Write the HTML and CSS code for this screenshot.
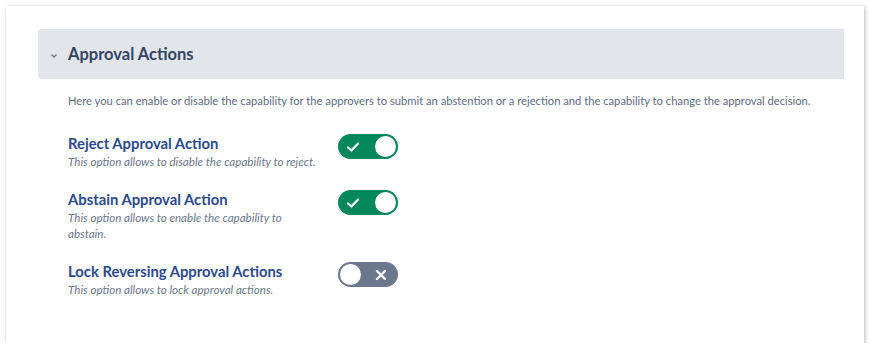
FILE: index.html
```html
<!DOCTYPE html>
<html lang="en">
<head>
    <meta charset="UTF-8">
    <meta name="viewport" content="width=device-width, initial-scale=1.0">
    <title>Approval Actions</title>
    <link rel="stylesheet" href="styles.css">
</head>
<body>
    <div class="card">
        <div class="section-header">
            <svg class="chevron" width="8" height="6" viewBox="0 0 8 6">
                <path d="M1.5 1.5 L4 4 L6.5 1.5" fill="none" stroke="#6b778c" stroke-width="1.3"/>
            </svg>
            <h2>Approval Actions</h2>
        </div>

        <div class="section-body">
            <p class="intro">Here you can enable or disable the capability for the approvers to submit an abstention or a rejection and the capability to change the approval decision.</p>

            <div class="option">
                <div class="option-text">
                    <div class="option-label">Reject Approval Action</div>
                    <div class="option-help">This option allows to disable the capability to reject.</div>
                </div>
                <div class="toggle on">
                    <svg class="toggle-icon" width="14" height="14" viewBox="0 0 14 14">
                        <path d="M2 7.5 L5.5 10.5 L12 3.5" fill="none" stroke="#fff" stroke-width="2.2" stroke-linecap="round" stroke-linejoin="round"/>
                    </svg>
                    <span class="knob"></span>
                </div>
            </div>

            <div class="option">
                <div class="option-text">
                    <div class="option-label">Abstain Approval Action</div>
                    <div class="option-help">This option allows to enable the capability to abstain.</div>
                </div>
                <div class="toggle on">
                    <svg class="toggle-icon" width="14" height="14" viewBox="0 0 14 14">
                        <path d="M2 7.5 L5.5 10.5 L12 3.5" fill="none" stroke="#fff" stroke-width="2.2" stroke-linecap="round" stroke-linejoin="round"/>
                    </svg>
                    <span class="knob"></span>
                </div>
            </div>

            <div class="option">
                <div class="option-text">
                    <div class="option-label">Lock Reversing Approval Actions</div>
                    <div class="option-help">This option allows to lock approval actions.</div>
                </div>
                <div class="toggle off">
                    <span class="knob"></span>
                    <svg class="toggle-icon" width="14" height="14" viewBox="0 0 14 14">
                        <path d="M3 3 L11 11 M11 3 L3 11" fill="none" stroke="#fff" stroke-width="2.4" stroke-linecap="round"/>
                    </svg>
                </div>
            </div>
        </div>
    </div>
</body>
</html>
```

FILE: styles.css
```css
body {
    margin: 0;
    padding: 6px 6px 0 6px;
    background-color: #fff;
    font-family: 'Lato', sans-serif;
    color: #172b4d;
}

.card {
    width: 858px;
    height: 337px;
    box-sizing: border-box;
    padding: 23px 20px 0 32px;
    background-color: #fff;
    box-shadow: 1px 1px 4px rgba(0,0,0,0.28);
}

.section-header {
    display: flex;
    align-items: center;
    height: 50px;
    background-color: #e2e5ea;
    border-radius: 4px 0 0 4px;
    padding-left: 12px;
}

.chevron {
    margin-right: 10px;
    margin-top: 3px;
}

.section-header h2 {
    margin: 0;
    font-size: 16.5px;
    font-weight: 700;
    color: #344563;
}

.section-body {
    padding-left: 30px;
}

.intro {
    margin: 14px 0 25px 0;
    font-size: 11.2px;
    line-height: 16px;
    color: #5e6c84;
}

.option {
    display: flex;
    align-items: flex-start;
    margin-bottom: 20px;
}

.option-text {
    width: 252px;
    margin-right: 18px;
}

.option-label {
    font-size: 14.8px;
    font-weight: 700;
    color: #2b4a8c;
    line-height: 18px;
    margin-bottom: 2px;
}

.option-help {
    font-size: 11.6px;
    font-style: italic;
    color: #6b778c;
    line-height: 16px;
}

.toggle {
    display: flex;
    align-items: center;
    justify-content: space-between;
    width: 60px;
    height: 25px;
    box-sizing: border-box;
    border-radius: 13px;
    padding: 0 2px 0 8px;
}

.toggle.on {
    background-color: #00875a;
}

.toggle.off {
    background-color: #6b778c;
    padding: 0 10px 0 2px;
}

.knob {
    width: 21px;
    height: 21px;
    border-radius: 50%;
    background-color: #fff;
}
```
